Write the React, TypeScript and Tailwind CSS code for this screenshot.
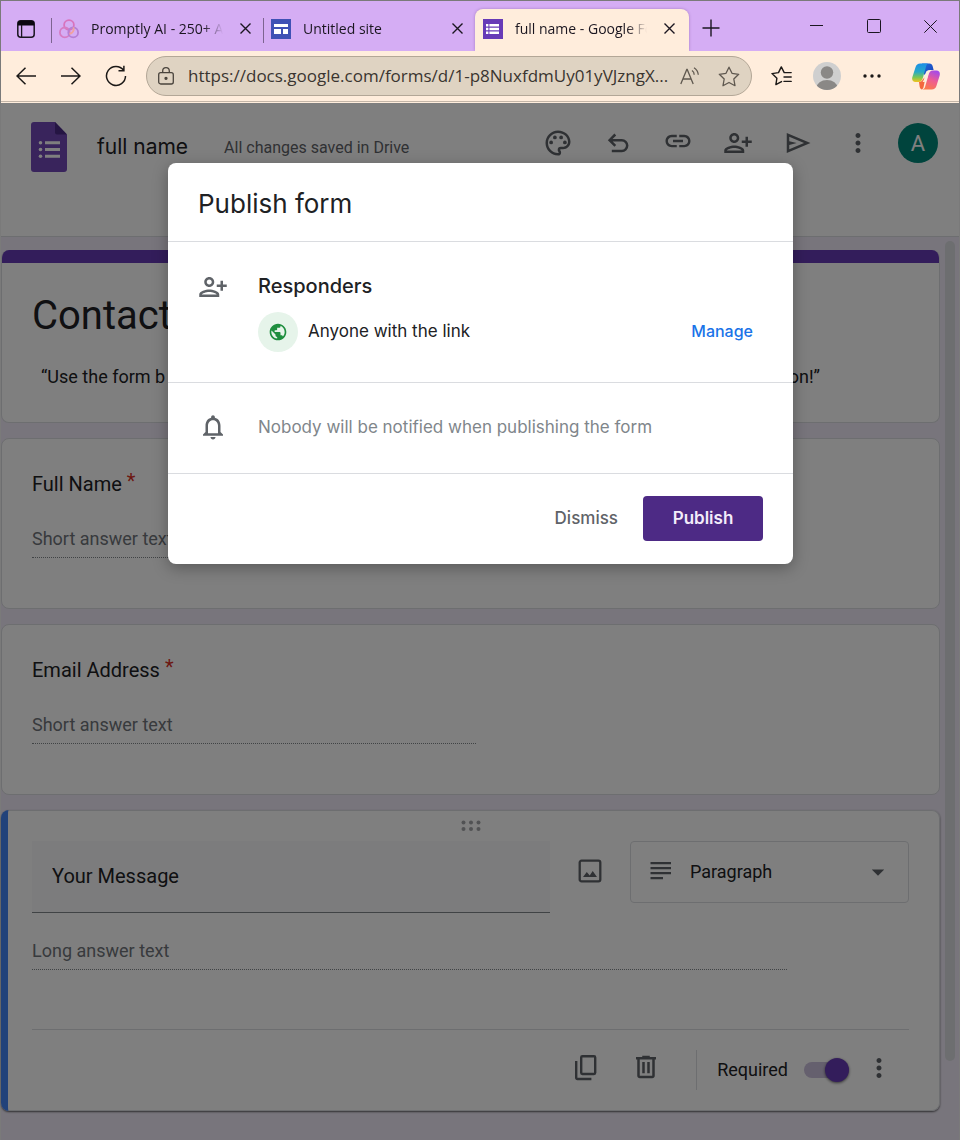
import type { ReactNode } from "react";
import {
  MdArrowDropDown,
  MdLink,
  MdMoreVert,
  MdNotificationsNone,
  MdOutlinePalette,
  MdOutlinePersonAddAlt1,
  MdPublic,
} from "react-icons/md";

const chromeFont = "font-['Open_Sans','Noto_Sans',sans-serif]";
const productFont = "font-['Inter','Roboto',sans-serif]";

function CloseGlyph({ size = 11 }: { size?: number }) {
  return (
    <svg width={size} height={size} viewBox="0 0 11 11" fill="none" stroke="#1b1620" strokeWidth="1.4" aria-hidden="true">
      <path d="M.5.5l10 10M10.5.5l-10 10" />
    </svg>
  );
}

function Separator() {
  return <span className="mb-2 h-[25px] w-px shrink-0 bg-[#7d6490]" />;
}

function Tab({ icon, title, active = false }: { icon: ReactNode; title: string; active?: boolean }) {
  return (
    <div
      className={
        active
          ? "flex h-[42px] min-w-0 flex-[0_1_214px] items-center gap-3 rounded-t-lg bg-[#ffeddc] pr-[10px] pb-[3px] pl-2 shadow-[0_0_3px_rgba(90,50,120,0.4)]"
          : "flex h-[42px] min-w-0 flex-[0_1_211px] items-center gap-3 pr-2 pb-[3px] pl-[7px]"
      }
    >
      {icon}
      <span className="min-w-0 flex-1 overflow-hidden text-[14px] leading-5 whitespace-nowrap text-[#1b1620] [mask-image:linear-gradient(to_right,black_calc(100%-20px),transparent)]">
        {title}
      </span>
      <button type="button" aria-label="Close tab" className="flex size-5 shrink-0 items-center justify-center">
        <CloseGlyph />
      </button>
    </div>
  );
}

function TabStrip() {
  return (
    <div className="flex h-[50px] items-end overflow-hidden bg-[#d5adf4]">
      <button type="button" aria-label="Tab actions" className="flex h-[42px] w-[50px] shrink-0 items-center justify-center pb-[2px]">
        <svg width="18" height="18" viewBox="0 0 18 18" fill="none" aria-hidden="true">
          <rect x=".8" y=".8" width="16.4" height="16.4" rx="3" stroke="#1b1620" strokeWidth="1.5" />
          <path d="M.8 5.5V3.6A2.8 2.8 0 0 1 3.6.8h10.8a2.8 2.8 0 0 1 2.8 2.8v1.9z" fill="#0b0710" />
          <path d="M4.6 5v12" stroke="#1b1620" strokeWidth="1.3" />
        </svg>
      </button>
      <Separator />
      <Tab
        title="Promptly AI - 250+ AI"
        icon={
          <svg className="shrink-0" width="20" height="20" viewBox="0 0 20 20" fill="none" strokeWidth="1.8" aria-hidden="true">
            <circle cx="10" cy="6" r="4.9" stroke="#d873bd" />
            <circle cx="5.8" cy="13.4" r="4.9" stroke="#d67cc4" />
            <circle cx="14.2" cy="13.4" r="4.9" stroke="#b57fd4" />
            <path d="M14.4 8.2a4.9 4.9 0 0 1-4 6.600" stroke="#f0a2a0" />
          </svg>
        }
      />
      <Separator />
      <Tab
        title="Untitled site"
        icon={
          <svg className="shrink-0" width="20" height="20" viewBox="0 0 20 20" aria-hidden="true">
            <path fill="#3f51b5" d="M0 0h20v20H0z" />
            <path fill="#fff" d="M3 5h14v3H3zM3 10h7v5H3zM12 10h5v5h-5z" />
          </svg>
        }
      />
      <Tab
        active
        title="full name - Google Forms"
        icon={
          <svg className="shrink-0" width="20" height="20" viewBox="0 0 20 20" aria-hidden="true">
            <path fill="#673ab7" d="M0 0h20v20H0z" />
            <path fill="#fff" d="M3 5h2.400v2.400H3zM6.400 5H16v2.400H6.400zM3 8.800h2.400v2.400H3zM6.400 8.800H16v2.400H6.400zM3 12.600h2.400V15H3zM6.400 12.600H16V15H6.400z" />
          </svg>
        }
      />
      <button type="button" aria-label="New tab" className="flex h-[42px] w-[43px] shrink-0 items-center justify-center pb-1">
        <svg width="18" height="18" viewBox="0 0 18 18" stroke="#1b1620" strokeWidth="1.4" aria-hidden="true">
          <path d="M9 .5v17M.5 9h17" />
        </svg>
      </button>
      <div className="ml-auto flex self-stretch">
        <button type="button" aria-label="Minimize" className="flex w-[57px] items-center justify-center">
          <svg width="13" height="13" viewBox="0 0 13 13" stroke="#1b1620" aria-hidden="true">
            <path d="M0 5.500h13" />
          </svg>
        </button>
        <button type="button" aria-label="Maximize" className="flex w-[57px] items-center justify-center">
          <svg width="14" height="14" viewBox="0 0 14 14" fill="none" stroke="#1b1620" aria-hidden="true">
            <rect x=".5" y=".5" width="13" height="13" rx="1" />
          </svg>
        </button>
        <button type="button" aria-label="Close window" className="flex w-[57px] items-center justify-center">
          <svg width="13" height="13" viewBox="0 0 13 13" stroke="#1b1620" aria-hidden="true">
            <path d="M.3.3l12.400 12.400M12.700.3L.3 12.700" />
          </svg>
        </button>
      </div>
    </div>
  );
}

function ToolButton({ label, children }: { label: string; children: ReactNode }) {
  return (
    <button type="button" aria-label={label} className="flex h-10 w-[45px] shrink-0 items-center justify-center">
      {children}
    </button>
  );
}

function CopilotLogo() {
  return (
    <svg width="28" height="27" viewBox="0 0 28 27" aria-hidden="true">
      <defs>
        <linearGradient id="cpA" x1="0.3" y1="0" x2="0.3" y2="1">
          <stop offset="0" stopColor="#1b8fe6" />
          <stop offset=".45" stopColor="#27a9c8" />
          <stop offset=".75" stopColor="#7cc653" />
          <stop offset="1" stopColor="#f4c21d" />
        </linearGradient>
        <linearGradient id="cpB" x1=".7" y1="0" x2=".3" y2="1">
          <stop offset="0" stopColor="#a44bea" />
          <stop offset=".5" stopColor="#ee5d92" />
          <stop offset="1" stopColor="#fb7a4a" />
        </linearGradient>
        <linearGradient id="cpC" x1="0" y1="0" x2="1" y2="1">
          <stop offset="0" stopColor="#1f6fdc" />
          <stop offset="1" stopColor="#1a3fb8" />
        </linearGradient>
      </defs>
      <path fill="url(#cpC)" d="M10 .5h7.500c1.700 0 2.600.9 3.100 2.500L21.600 7H18c-2 0-3 1-3.500 2.800L12 12z" />
      <path fill="url(#cpA)" d="M8.300.5h8.200c-1.400.3-2 1.300-2.400 2.700L11 14.500c-.8 2.600-1.800 4.500-4.500 4.500H3.600C.6 19-.4 16.700.4 14L3.600 4C4.300 1.800 5.700.5 8.300.5z" />
      <path fill="#f4683e" d="M7 19c2 0 3.300-1 4-3l2.500-2-1.500 8c-.5 2.500-.8 3.800-2 4.500-1 0-1.900-.8-2.300-2.400z" />
      <path fill="url(#cpB)" d="M19.700 26.500H10.500c1.600-.3 2.200-1.300 2.600-2.700l3.300-11.600C17.200 9.500 18.300 7.500 21 7.500h3.400c3 0 4 2.500 3.200 5.200L24.400 23c-.7 2.200-2.100 3.500-4.700 3.500z" />
      <path fill="#ffeddc" d="M14 9c.6-1 1.400-1.500 2.600-1.500h1.700c-1.200.9-1.700 2.500-2.100 4l-1.300 4.500c-.5 1.800-1.400 2.900-3.200 2.900h-1.200c1-1 1.300-2.100 1.700-3.400z" />
    </svg>
  );
}

function Toolbar() {
  return (
    <div className="bg-[#ffeddc] pb-px">
      <div className="flex h-[51px] items-center border-b border-[#c3b5a7] pr-px pl-[2px]">
        <ToolButton label="Back">
          <svg width="20" height="18" viewBox="0 0 20 18" fill="none" stroke="#1c1917" strokeWidth="1.500" aria-hidden="true">
            <path d="M20 9H1M9.500.7L1 9l8.500 8.300" />
          </svg>
        </ToolButton>
        <ToolButton label="Forward">
          <svg width="20" height="18" viewBox="0 0 20 18" fill="none" stroke="#1c1917" strokeWidth="1.500" aria-hidden="true">
            <path d="M0 9h19M10.500.7L19 9l-8.500 8.300" />
          </svg>
        </ToolButton>
        <ToolButton label="Reload">
          <svg width="22" height="22" viewBox="0 0 22 22" fill="none" stroke="#1c1917" strokeWidth="1.500" aria-hidden="true">
            <path d="M18.600 5.200A9.500 9.500 0 1 0 20.500 11M18.900.8v5h-5.400" />
          </svg>
        </ToolButton>
        <div className="mr-[7px] ml-2 flex h-10 min-w-0 flex-1 items-center rounded-full border border-[#b3a797] bg-[#dfd3c2] pr-[11px] pl-[11px]">
          <svg className="shrink-0" width="16" height="18" viewBox="0 0 16 18" fill="none" stroke="#4a443d" strokeWidth="1.300" aria-hidden="true">
            <rect x=".7" y="5.700" width="14.600" height="11.300" rx="2" />
            <path d="M4.700 5.500V4a3.300 3.300 0 0 1 6.600 0v1.500" />
            <circle cx="8" cy="11.300" r="1" fill="#4a443d" />
          </svg>
          <input
            type="text"
            aria-label="Address"
            defaultValue="https://docs.google.com/forms/d/1-p8NuxfdmUy01yVJzngX..."
            className="ml-[14px] h-full min-w-0 flex-1 bg-transparent pb-0.5 text-[17px] text-[#3a3530] outline-none"
          />
          <button type="button" aria-label="Read aloud" className="mr-[10px] flex w-9 shrink-0 justify-center">
            <svg width="20" height="18" viewBox="0 0 20 18" fill="none" stroke="#5f584f" strokeWidth="1.300" aria-hidden="true">
              <path d="M.8 17L6.800 2.500h.4L13.200 17M3 12h8M12 3.500a5 5 0 0 1 2.200 4.300M14 .8a9 9 0 0 1 4.300 7" />
            </svg>
          </button>
          <button type="button" aria-label="Add to favorites" className="flex w-[22px] shrink-0 justify-center">
            <svg width="22" height="21" viewBox="0 0 22 21" fill="none" stroke="#5f584f" strokeWidth="1.300" strokeLinejoin="round" aria-hidden="true">
              <path d="M11 1.200l3 6.100 6.700 1-4.900 4.700 1.200 6.700-6-3.200-6 3.200L6.200 13 1.300 8.300l6.700-1z" />
            </svg>
          </button>
        </div>
        <ToolButton label="Favorites">
          <svg width="21" height="20" viewBox="0 0 21 20" fill="none" stroke="#1c1917" strokeWidth="1.400" strokeLinejoin="round" strokeLinecap="round" aria-hidden="true">
            <path d="M10.500 15.600l-5.600 3 1-6.400L1 7.600l6.500-1L10.300.9l2.900 5.700h7M13 11h7.200M13 15.400h7.200" />
          </svg>
        </ToolButton>
        <ToolButton label="Profile">
          <svg width="28" height="28" viewBox="0 0 28 28" aria-hidden="true">
            <clipPath id="pf">
              <circle cx="14" cy="14" r="14" />
            </clipPath>
            <g clipPath="url(#pf)">
              <path fill="#cfcfcf" d="M0 0h28v28H0z" />
              <circle cx="14" cy="10.500" r="6.200" fill="#8a8886" />
              <ellipse cx="14" cy="26" rx="10.500" ry="8" fill="#8a8886" />
            </g>
          </svg>
        </ToolButton>
        <ToolButton label="Settings and more">
          <svg width="18" height="4" viewBox="0 0 18 4" fill="#1c1917" aria-hidden="true">
            <circle cx="2" cy="2" r="1.700" />
            <circle cx="9" cy="2" r="1.700" />
            <circle cx="16" cy="2" r="1.700" />
          </svg>
        </ToolButton>
        <button type="button" aria-label="Copilot" className="flex h-10 w-16 shrink-0 items-center justify-center">
          <CopilotLogo />
        </button>
      </div>
    </div>
  );
}

function HeaderButton({ label, children }: { label: string; children: ReactNode }) {
  return (
    <button type="button" aria-label={label} className="flex h-full w-[60px] items-center justify-center text-[#5f6368]">
      {children}
    </button>
  );
}

function FormHeader() {
  return (
    <header className="flex h-[134px] shrink-0 items-start justify-between border-b border-[#dadce0] bg-white pr-[11px] pl-[30px]">
      <div className="flex h-[87px] items-center">
        <svg width="36" height="50" viewBox="0 0 36 50" aria-hidden="true">
          <path fill="#7248b9" d="M3 0h21l12 12.500V47a3 3 0 0 1-3 3H3a3 3 0 0 1-3-3V3a3 3 0 0 1 3-3z" />
          <path fill="#4a2b86" d="M24 0l12 12.500H26a2 2 0 0 1-2-2z" />
          <path fill="#fff" d="M14 19.200h15v3H14zM14 26h15v3H14zM14 32.800h15v3H14z" />
          <g fill="#fff">
            <circle cx="9.500" cy="20.700" r="1.800" />
            <circle cx="9.500" cy="27.500" r="1.800" />
            <circle cx="9.500" cy="34.300" r="1.800" />
          </g>
        </svg>
        <h1 className={`ml-[30px] text-[21px] leading-7 text-[#202124] ${productFont}`}>full name</h1>
        <span className="ml-9 pt-0.5 text-[16px] leading-6 text-[#5f6368]">All changes saved in Drive</span>
      </div>
      <div className="flex h-20 items-center">
        <HeaderButton label="Customize theme">
          <MdOutlinePalette size={30} />
        </HeaderButton>
        <HeaderButton label="Undo">
          <svg width="22" height="20" viewBox="0 0 22 20" fill="none" stroke="currentColor" strokeWidth="2.500" aria-hidden="true">
            <path d="M8.300 1.500L2.600 7.200l5.700 5.700M3 7.200h11.800a5.400 5.400 0 0 1 0 10.800H4.800" />
          </svg>
        </HeaderButton>
        <HeaderButton label="Copy responder link">
          <MdLink size={30} className="mb-1" />
        </HeaderButton>
        <HeaderButton label="Share">
          <MdOutlinePersonAddAlt1 size={30} />
        </HeaderButton>
        <HeaderButton label="Publish">
          <svg width="30" height="30" viewBox="0 -960 960 960" fill="currentColor" aria-hidden="true">
            <path d="M120-160v-640l760 320-760 320Zm80-120 474-200-474-200v140l240 60-240 60v140Zm0 0v-400 400Z" />
          </svg>
        </HeaderButton>
        <HeaderButton label="More">
          <MdMoreVert size={30} />
        </HeaderButton>
        <HeaderButton label="Account">
          <span className="flex size-10 items-center justify-center rounded-full bg-[#00897b] text-[22px] text-white">A</span>
        </HeaderButton>
      </div>
    </header>
  );
}

function QuestionCard({ id, label }: { id: string; label: string }) {
  return (
    <section className="h-[171px] rounded-lg border border-[#dadce0] bg-white px-[30px] pt-[31px]">
      <label htmlFor={id} className="block text-[20px] leading-7 text-[#202124]">
        {label} <span className="relative -top-[3px] text-[#d93025]">*</span>
      </label>
      <input
        id={id}
        type="text"
        placeholder="Short answer text"
        className="mt-7 block h-8 w-full max-w-[444px] border-b border-dotted border-[#80868b] bg-transparent pb-1.5 text-[18px] outline-none placeholder:text-[#70757a]"
      />
    </section>
  );
}

function ActiveQuestionCard() {
  return (
    <section className="overflow-hidden rounded-lg border-l-[7px] border-[#4285f4] shadow-[0_1px_2px_rgba(0,0,0,0.6)]">
      <div className="rounded-r-lg border-y border-r border-[#dadce0] bg-white pr-[30px] pb-5 pl-6">
        <div className="flex h-[30px] justify-center pt-[9px]">
          <svg width="20" height="12" viewBox="0 0 20 12" fill="#a3a5a8" aria-hidden="true">
            <circle cx="2.500" cy="2.500" r="2" />
            <circle cx="10" cy="2.500" r="2" />
            <circle cx="17.500" cy="2.500" r="2" />
            <circle cx="2.500" cy="9" r="2" />
            <circle cx="10" cy="9" r="2" />
            <circle cx="17.500" cy="9" r="2" />
          </svg>
        </div>
        <div className="flex items-start">
          <input
            type="text"
            aria-label="Question"
            defaultValue="Your Message"
            className="h-[72px] min-w-0 flex-1 border-b border-[#80868b] bg-[#f8f9fa] px-5 pb-0.5 text-[20px] text-[#202124] outline-none"
          />
          <button type="button" aria-label="Add image" className="flex h-[60px] w-20 shrink-0 items-center justify-center pb-px">
            <svg width="24" height="24" viewBox="0 0 24 24" fill="none" aria-hidden="true">
              <rect x="1.700" y="1.700" width="20.600" height="20.600" rx="1.800" stroke="#5f6368" strokeWidth="2.300" />
              <path fill="#5f6368" d="M5 18l3.800-5 2.900 3.500 3-4.500L19 18z" />
            </svg>
          </button>
          <div className="relative w-[279px] shrink-0 text-[#5f6368]">
            <select
              aria-label="Question type"
              className="block h-[62px] w-full appearance-none rounded border border-[#dadce0] bg-transparent pb-0.5 pl-[59px] text-[18px] text-[#202124]"
            >
              <option>Paragraph</option>
            </select>
            <svg className="pointer-events-none absolute top-5 left-5" width="22" height="20" viewBox="0 0 22 20" fill="currentColor" aria-hidden="true">
              <path d="M.5 1h20.500v2.300H.5zM.5 6h20.500v2.300H.5zM.5 11h20.500v2.300H.5zM.5 16h12.500v2.300H.5z" />
            </svg>
            <MdArrowDropDown size={30} className="pointer-events-none absolute top-4 right-4" />
          </div>
        </div>
        <input
          type="text"
          aria-label="Long answer"
          placeholder="Long answer text"
          className="mt-6 block h-[33px] w-full max-w-[755px] border-b border-dotted border-[#80868b] bg-transparent pb-1.5 text-[18px] outline-none placeholder:text-[#70757a]"
        />
        <div className="mt-[59px] flex items-center justify-end border-t border-[#dadce0] pt-5 text-[#5f6368]">
          <button type="button" aria-label="Duplicate" className="flex h-10 w-[60px] items-center justify-center pb-[3px]">
            <svg width="24" height="28" viewBox="0 0 24 28" fill="none" stroke="currentColor" strokeWidth="2.400" aria-hidden="true">
              <rect x="7.200" y="1.200" width="14" height="17.800" rx="1.200" />
              <path d="M2.200 6v16.800a1.200 1.200 0 0 0 1.200 1.200h14" />
            </svg>
          </button>
          <button type="button" aria-label="Delete" className="flex h-10 w-[60px] items-center justify-center pb-[7px]">
            <svg width="30" height="30" viewBox="0 -960 960 960" fill="currentColor" aria-hidden="true">
              <path d="M280-120q-33 0-56.500-23.500T200-200v-520h-40v-80h200v-40h240v40h200v80h-40v520q0 33-23.500 56.500T680-120H280Zm400-600H280v520h400v-520ZM360-280h80v-360h-80v360Zm160 0h80v-360h-80v360Z" />
            </svg>
          </button>
          <label className="ml-5 flex h-10 items-center gap-4 border-l border-[#dadce0] pb-px pl-5 text-[18px] text-[#202124]">
            Required
            <input
              type="checkbox"
              defaultChecked
              role="switch"
              className="relative h-4 w-[45px] appearance-none rounded-full bg-[#cbc0dc] before:absolute before:-top-1 before:right-0 before:size-6 before:rounded-full before:bg-[#673ab7] before:shadow-[0_1px_3px_rgba(0,0,0,0.6)]"
            />
          </label>
          <button type="button" aria-label="More options" className="flex h-10 w-[60px] items-center justify-center pb-1">
            <MdMoreVert size={30} />
          </button>
        </div>
      </div>
    </section>
  );
}

function PublishDialog() {
  return (
    <div className="absolute inset-x-0 top-[60px] flex justify-center pl-px">
      <div
        role="dialog"
        aria-modal="true"
        aria-labelledby="publish-title"
        className={`w-[625px] rounded-lg bg-white shadow-[0_4px_16px_rgba(0,0,0,0.3)] ${productFont}`}
      >
        <h2 id="publish-title" className="border-b border-[#dadce0] px-[30px] pt-[25px] pb-[21px] text-[26px] leading-8 text-[#202124]">
          Publish form
        </h2>
        <div className="flex border-b border-[#dadce0] px-[30px] py-[30px] text-[#5f6368]">
          <MdOutlinePersonAddAlt1 size={30} className="shrink-0" />
          <div className="ml-[30px] flex-1">
            <h3 className="text-[20px] leading-7 font-medium text-[#202124]">Responders</h3>
            <div className="mt-3 flex h-10 items-center">
              <span className="flex size-10 items-center justify-center rounded-full bg-[#e6f4ea] text-[#1e8e3e]">
                <MdPublic size={20} />
              </span>
              <span className="ml-[10px] text-[17px] text-[#202124]">Anyone with the link</span>
              <button type="button" className="mr-[10px] ml-auto pb-0.5 text-[16px] font-medium text-[#1a73e8]">
                Manage
              </button>
            </div>
          </div>
        </div>
        <div className="flex items-center border-b border-[#dadce0] px-[30px] pt-[29px] pb-[31px] text-[#5f6368]">
          <MdNotificationsNone size={30} className="shrink-0" />
          <p className="ml-[30px] text-[17px] leading-6 text-[#80868b]">Nobody will be notified when publishing the form</p>
        </div>
        <div className="flex items-center justify-end px-[30px] pt-[22px] pb-[23px]">
          <button type="button" className="px-[25px] text-[17px] font-medium text-[#5f6368]">
            Dismiss
          </button>
          <button type="button" className="h-[45px] w-[120px] rounded bg-[#4d2a85] text-[17px] font-semibold text-[#f3ecfa]">
            Publish
          </button>
        </div>
      </div>
    </div>
  );
}

export default function App() {
  return (
    <div className={`flex min-h-screen flex-col border-x border-t border-[#7a7a7a] bg-[#f0ebf8] ${chromeFont}`}>
      <TabStrip />
      <Toolbar />
      <div className="relative flex flex-1 flex-col font-['Roboto',sans-serif]">
        <FormHeader />
        <main className="flex flex-1">
          <div className="flex min-w-0 flex-1 flex-col gap-[15px] pt-[13px]">
            <section className="h-[173px] overflow-hidden rounded-lg border-x border-b border-[#dadce0] bg-white">
              <div className="-mx-px h-[13px] bg-[#673ab7]" />
              <h2 className="px-[30px] pt-[29px] text-[40px] leading-[48px] text-[#202124]">Contact</h2>
              <p className="mt-[25px] flex justify-between pr-[119px] pl-[39px] text-[18px] leading-6 text-[#202124]">
                <span>“Use the form b</span>
                <span>on!”</span>
              </p>
            </section>
            <QuestionCard id="full-name" label="Full Name" />
            <QuestionCard id="email" label="Email Address" />
            <ActiveQuestionCard />
          </div>
          <div className="w-[19px] shrink-0 pt-1 pr-1 pl-[5px]">
            <div className="h-[820px] w-[10px] rounded-full bg-[#dadce0]" />
          </div>
        </main>
        <div className="absolute inset-0 bg-black/50" />
        <PublishDialog />
      </div>
    </div>
  );
}
